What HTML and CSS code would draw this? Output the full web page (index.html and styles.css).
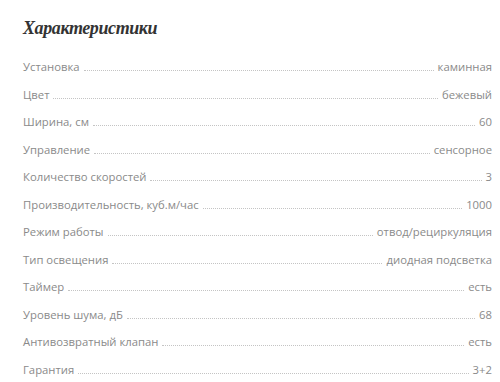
FILE: index.html
```html
<!DOCTYPE html>
<html lang="ru">
<head>
<meta charset="utf-8">
<link rel="stylesheet" href="styles.css">
</head>
<body>
<section class="specs">
  <h2 class="specs-title">Характеристики</h2>
  <ul class="specs-list">
    <li class="spec"><span class="spec-name">Установка</span><span class="spec-dots"></span><span class="spec-value">каминная</span></li>
    <li class="spec"><span class="spec-name">Цвет</span><span class="spec-dots"></span><span class="spec-value">бежевый</span></li>
    <li class="spec"><span class="spec-name">Ширина, см</span><span class="spec-dots"></span><span class="spec-value">60</span></li>
    <li class="spec"><span class="spec-name">Управление</span><span class="spec-dots"></span><span class="spec-value">сенсорное</span></li>
    <li class="spec"><span class="spec-name">Количество скоростей</span><span class="spec-dots"></span><span class="spec-value">3</span></li>
    <li class="spec"><span class="spec-name">Производительность, куб.м/час</span><span class="spec-dots"></span><span class="spec-value">1000</span></li>
    <li class="spec"><span class="spec-name">Режим работы</span><span class="spec-dots"></span><span class="spec-value">отвод/рециркуляция</span></li>
    <li class="spec"><span class="spec-name">Тип освещения</span><span class="spec-dots"></span><span class="spec-value">диодная подсветка</span></li>
    <li class="spec"><span class="spec-name">Таймер</span><span class="spec-dots"></span><span class="spec-value">есть</span></li>
    <li class="spec"><span class="spec-name">Уровень шума, дБ</span><span class="spec-dots"></span><span class="spec-value">68</span></li>
    <li class="spec"><span class="spec-name">Антивозвратный клапан</span><span class="spec-dots"></span><span class="spec-value">есть</span></li>
    <li class="spec"><span class="spec-name">Гарантия</span><span class="spec-dots"></span><span class="spec-value">3+2</span></li>
  </ul>
</section>
</body>
</html>
```

FILE: styles.css
```css
html, body {
  margin: 0;
  padding: 0;
  background: #fff;
}

.specs {
  padding: 17px 8px 0 23px;
}

.specs-title {
  margin: 0;
  font-family: "Liberation Serif", "Times New Roman", serif;
  font-style: italic;
  font-weight: bold;
  font-size: 18px;
  letter-spacing: -0.4px;
  line-height: 22px;
  color: #333;
}

.specs-list {
  list-style: none;
  margin: 20px 0 0;
  padding: 0;
  display: flex;
  flex-direction: column;
  gap: 11px;
}

.spec {
  display: flex;
  align-items: baseline;
  font-family: "Open Sans", "Noto Sans", sans-serif;
  font-size: 11.3px;
  line-height: 16.5px;
  color: #8a8a8a;
}

.spec-dots {
  flex: 1;
  margin: 0 4px;
  border-bottom: 1px dotted #c4c4c4;
}
```
